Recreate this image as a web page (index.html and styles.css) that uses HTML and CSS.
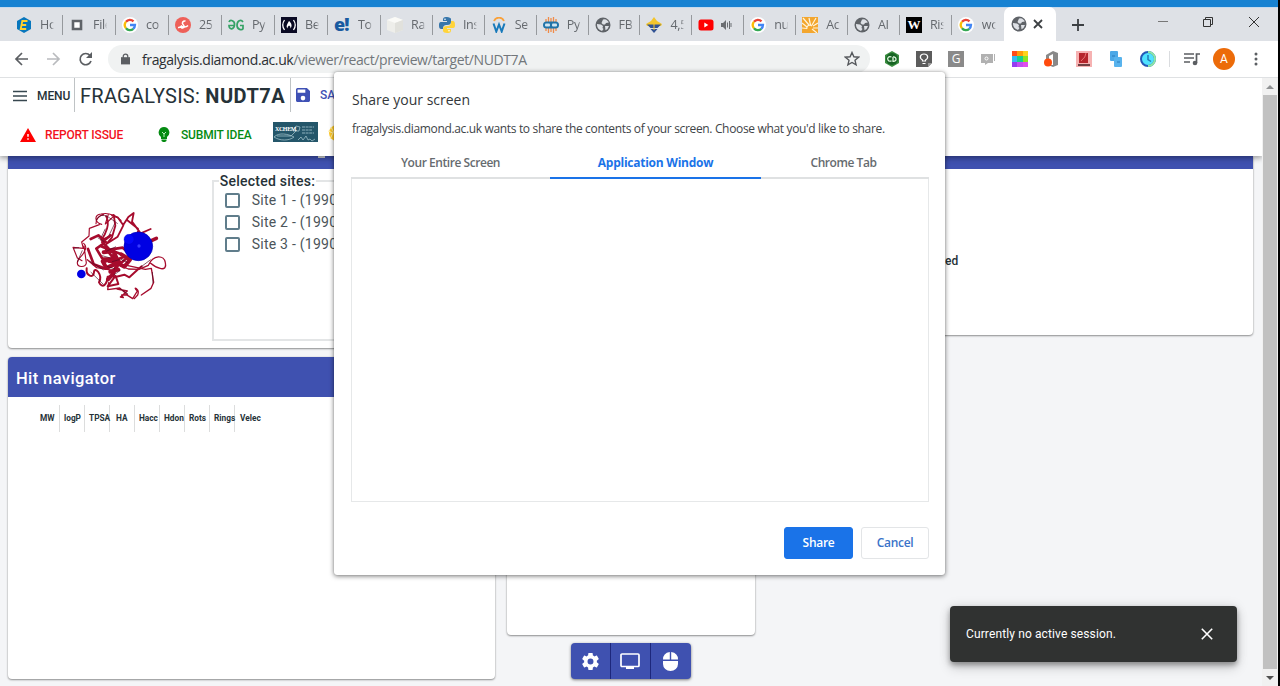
FILE: index.html
```html
<!DOCTYPE html>
<html lang="en">
<head>
<meta charset="utf-8">
<title>Fragalysis: NUDT7A</title>
<link rel="stylesheet" href="styles.css">
</head>
<body>
<svg class="defs" width="0" height="0">
  <symbol id="google" viewBox="0 0 16 16"><circle cx="8" cy="8" r="8" fill="#fff"/><g fill="none" stroke-width="2.3"><path d="M4 4.8A5 5 0 0 1 11.5 4.4" stroke="#ea4335"/><path d="M4 11.2A5 5 0 0 1 4 4.8" stroke="#fbbc05"/><path d="M11.3 11.8A5 5 0 0 1 4 11.2" stroke="#34a853"/><path d="M8 8h5A5 5 0 0 1 11.2 11.8" stroke="#4285f4"/></g></symbol>
  <symbol id="globe" viewBox="0 0 16 16"><circle cx="8" cy="8" r="7.500" fill="#5f6368"/><path d="M2 7l4 .5 2 1.500-.5 2 1 1-1.500 2C4 13 2 11 2 8zM8 2.500l2-.3c2 .6 3.300 2 3.800 3.300L11 6l-1 1.500H8L6.500 6zM10 9h4l-1.500 3-2 1.200z" fill="#dee1e6"/></symbol>
</svg>
<div class="browser">
  <div class="titlebar"></div>
  <div class="tabs">
    <div class="tab"><svg class="fav" viewBox="0 0 16 16"><path d="M8 0l7 4v8l-7 4-7-4V4z" fill="#0877bd"/><path d="M11.500 4H6.300L4.700 12h5.500M5.500 8h4.700" stroke="#ffd02e" stroke-width="1.8" fill="none"/></svg><span>Ho</span></div>
    <div class="tab"><svg class="fav" viewBox="0 0 16 16"><path d="M4 4h8v8H4z" fill="#fff" stroke="#5f6368" stroke-width="2.600"/></svg><span>File</span></div>
    <div class="tab"><svg class="fav"><use href="#google"/></svg><span>co</span></div>
    <div class="tab"><svg class="fav" viewBox="0 0 16 16"><circle cx="8" cy="8" r="8" fill="#ee6059"/><path d="M3 10.500c2 .5 3-.5 4-2M10.500 4C8 3.500 6.500 6 8 7.500s2 3-.5 3.500c-1.500.2-1.500-1.500 0-1.200 2 .4 4 .4 5.500-1.300" stroke="#fff" stroke-width="1.500" fill="none"/></svg><span>25</span></div>
    <div class="tab"><svg class="fav" viewBox="0 0 16 16"><g fill="none" stroke="#35a266" stroke-width="1.700"><path d="M1 5C2 2.500 7 3 6.500 8S1 13 1 8.500h6M15 5c-2-3-6-1.500-6 3.300s5 5 6 3.500V8.500h-3"/></g></svg><span>Py</span></div>
    <div class="tab"><svg class="fav" viewBox="0 0 16 16"><path d="M0 0h16v16H0z" fill="#0a0a23"/><path d="M3.500 3Q0 8 3.500 13M12.500 3q3.500 5 0 10" fill="none" stroke="#fff" stroke-width="1.300"/><path d="M8 4c2.500 2 3.500 5 1.500 7.500C9.500 9.500 9 9 8 8.500 7 9.500 6.500 10 6.500 11.500 4.500 9 6.500 7 8 4z" fill="#fff"/></svg><span>Be</span></div>
    <div class="tab"><b class="fav eb">e!</b><span>Top</span></div>
    <div class="tab"><svg class="fav" viewBox="0 0 16 16"><path d="M8 0l8 3v10l-8 3-8-3V3z" fill="#eeeeea"/><path d="M0 3l8 3 8-3-8-3z" fill="#fafaf7"/><path d="M8 6l8-3v10l-8 3z" fill="#e1e1dc"/></svg><span>Ra</span></div>
    <div class="tab"><svg class="fav" viewBox="0 0 16 16"><path d="M8 0C4 0 4 1 4 4h4v1H2C0 5 0 7 0 8s0 4 2 4h2c0-3 1-4 4-4s4-1 4-3V2c0-1-2-2-4-2z" fill="#3776ab"/><path d="M8 16c4 0 4-1 4-4H8v-1h6c2 0 2-2 2-3s0-4-2-4h-2c0 4-1 5-4 5s-4 1-4 3v2c0 1 2 2 4 2z" fill="#ffd43b"/><circle cx="6" cy="2.300" r=".8" fill="#fff"/><circle cx="10" cy="13.700" r=".8" fill="#fff"/></svg><span>Ins</span></div>
    <div class="tab"><svg class="fav" viewBox="0 0 16 16"><path d="M3 4C5-.5 11-.5 13 4" fill="none" stroke="#f9a13a" stroke-width="1.800"/><path d="M2.500 6.500l2.800 8L8 7.500l2.700 7 2.800-8" fill="none" stroke="#1779ba" stroke-width="2"/></svg><span>Se</span></div>
    <div class="tab"><svg class="fav" viewBox="0 0 16 16"><g stroke="#f08b49" stroke-width="1.300"><path d="M3 2v12M5.500 0v16M8 1v14M10.500 0v16M13 2v12"/></g><rect y="4.500" width="16" height="7" rx="3.500" fill="#2173a8"/><rect x="2" y="6.500" width="5" height="3" rx="1" fill="#cfe5f2"/><rect x="9" y="6.500" width="5" height="3" rx="1" fill="#cfe5f2"/></svg><span>Py</span></div>
    <div class="tab"><svg class="fav"><use href="#globe"/></svg><span>FB</span></div>
    <div class="tab"><svg class="fav" viewBox="0 0 16 16"><path d="M8 0l3 4 5 3-1 2H1L0 7l5-3z" fill="#f4c52c"/><path d="M1 7.500h14L11.500 11h-7zM4.500 12h7L8 16z" fill="#315294"/><path d="M8 5v8" stroke="#f4c52c"/></svg><span>4,5</span></div>
    <div class="tab"><svg class="fav" viewBox="0 0 16 16"><rect x=".5" y="2.500" width="15" height="11" rx="2.500" fill="#f00"/><path d="M6.300 5.500v5l4-2.500z" fill="#fff"/></svg><svg class="audio" viewBox="0 0 11 10"><path d="M0 3h2l3-3v10L2 7H0z" fill="#6b6e72"/><path d="M6.500 2.500v5M8.500 1v8M10 3v4" stroke="#6b6e72"/></svg></div>
    <div class="tab"><svg class="fav"><use href="#google"/></svg><span>nu</span></div>
    <div class="tab"><svg class="fav" viewBox="0 0 16 16"><path d="M0 0h16v16H0z" fill="#f3a62e"/><path d="M0 6l5 4M1 1l6 7M7 1l1.500 7M14 1l-4 7M16 6l-5 3M16 11l-5 0M15 16l-5-4M0 11l5 .5M5 12a3 3 0 0 1 5-3" stroke="#fff4db" stroke-width="1.200" fill="none"/></svg><span>Ac</span></div>
    <div class="tab"><svg class="fav"><use href="#globe"/></svg><span>AI</span></div>
    <div class="tab"><b class="fav wb">W</b><span>Ris</span></div>
    <div class="tab"><svg class="fav"><use href="#google"/></svg><span>wo</span></div>
    <div class="tab active"><svg class="fav"><use href="#globe"/></svg><svg class="tabclose" viewBox="0 0 10 10"><path d="M1 1l8 8M9 1l-8 8"/></svg></div>
    <svg class="newtab" viewBox="0 0 12 12"><path d="M6 0v12M0 6h12"/></svg>
    <svg class="wincontrols" viewBox="0 0 104 14"><path d="M1 6.500h10" stroke="#777"/><path d="M46.500 4.500h7v7h-7zM48.500 4V2.500h7v7H54M92 2l10 10M102 2L92 12" fill="none" stroke="#333"/></svg>
  </div>
  <div class="toolbar">
    <svg class="nav" viewBox="0 0 80 16"><g fill="none" stroke-width="1.700"><path d="M14 8H2M8 2L2 8l6 6" stroke="#5b5e62"/><path d="M33 8h12M39 2l6 6-6 6" stroke="#b9bbbe"/><path d="M76 4.500A5.600 5.600 0 1 0 77 10" stroke="#5b5e62"/></g><path d="M78 1v6h-6z" fill="#5b5e62"/></svg>
    <div class="omnibox">
      <svg class="lock" viewBox="0 0 10 12"><path d="M0 4h10v8H0z" fill="#5b5e62"/><path d="M2.500 5V3a2.500 2.500 0 0 1 5 0v2" fill="none" stroke="#5b5e62" stroke-width="1.400"/></svg>
      <span class="url"><i>fragalysis.diamond.ac.uk</i>/viewer/react/preview/target/NUDT7A</span>
      <svg class="star" viewBox="0 0 16 16"><path d="M8 1.500l1.900 4.300 4.700.4-3.600 3.100 1.100 4.600L8 11.500l-4.100 2.400L5 9.300 1.400 6.200l4.700-.4z" fill="none" stroke="#55585c" stroke-width="1.400"/></svg>
    </div>
    <div class="extensions">
      <svg viewBox="0 0 16 16"><path d="M8 0l7 4v8l-7 4-7-4V4z" fill="#3b8d40"/><circle cx="8" cy="8" r="6" fill="#176424"/><path d="M7.500 6C4.500 5 3 7 4 9s3 1 3.500 1M9 6v4.300c4 .7 4-5 0-4.300" fill="none" stroke="#e1f7df" stroke-width="1.300"/></svg>
      <svg viewBox="0 0 16 16"><path d="M0 0h16v12l-4 4H0z" fill="#5c5c5c"/><path d="M12 16v-4h4z" fill="#999"/><path d="M6.500 10V9C3 7 4 3 8 3s5 4 1.500 6v1zM6.500 12.500h3" fill="none" stroke="#fff" stroke-width="1.200"/></svg>
      <b class="gbox">G</b>
      <svg viewBox="0 0 16 16"><path d="M1 3h12v9H8l-3 2v-2H1zM14 3h1v7h-1z" fill="#b1b1b1"/><circle cx="6.500" cy="7.500" r="1.500" fill="none" stroke="#fff"/></svg>
      <svg viewBox="0 0 16 16"><path d="M0 0h5v5H0z" fill="#ff4b19"/><path d="M5 0h6v5H5z" fill="#ff9b0b"/><path d="M11 0h5v5h-5z" fill="#ffd31b"/><path d="M0 5h5v6H0z" fill="#35baf1"/><path d="M5 5h6v6H5z" fill="#16cf91"/><path d="M11 5h5v6h-5z" fill="#8be522"/><path d="M0 11h5v5H0z" fill="#943cf0"/><path d="M5 11h6v5H5z" fill="#c34df2"/><path d="M11 11h5v5h-5z" fill="#e14eed"/></svg>
      <svg viewBox="0 0 16 16"><path d="M2 4l7-4 5 2v12l-5 2-5-2h5V3L5 5v5H2z" fill="#898989"/><circle cx="4" cy="11.500" r="4" fill="#ff4b0d"/></svg>
      <svg viewBox="0 0 16 16"><path d="M0 0h16v16H0z" fill="#f6b2b2"/><path d="M3 2h9v10H3z" fill="#b6252c"/><path d="M5 10q5-4 5-8" stroke="#e87272" fill="none"/><path d="M2 14h12" stroke="#431d20" stroke-width="1.500"/></svg>
      <svg viewBox="0 0 16 16"><rect x="2" width="8" height="10" rx="1" fill="#4ca8e7"/><rect x="6" y="6" width="8" height="10" rx="1" fill="#58b3ed"/><path d="M4 5h3M9 11h3" stroke="#2a7bbb"/></svg>
      <svg viewBox="0 0 16 16"><circle cx="8" cy="8" r="7" fill="#4fe2ff" stroke="#2559b7" stroke-width="2"/><path d="M8 1a7 7 0 0 1 0 14" stroke="#8ee7a5" stroke-width="2" fill="none"/><path d="M8 4v4.500l3 2" fill="none" stroke="#237bb6" stroke-width="1.500"/></svg>
    </div>
    <i class="divider"></i>
    <svg class="queue" viewBox="0 0 16 14"><path d="M0 2h10M0 6h10M0 10h6M12.500 11V2H16" fill="none" stroke="#5b5e62" stroke-width="1.700"/><circle cx="11" cy="11" r="2.300" fill="#5b5e62"/></svg>
    <span class="avatar">A</span>
    <svg class="dots" viewBox="0 0 4 14"><g fill="#5b5e62"><circle cx="2" cy="2" r="1.500"/><circle cx="2" cy="7" r="1.500"/><circle cx="2" cy="12" r="1.500"/></g></svg>
  </div>
  <div class="viewport">
    <main class="page">
      <header class="apphead">
        <div class="row main-row">
          <div class="menu"><svg viewBox="0 0 14 12"><path d="M0 1.500h14M0 6h14M0 10.500h14"/></svg>MENU</div>
          <h1>FRAGALYSIS: <b>NUDT7A</b></h1>
          <div class="save"><svg viewBox="3 3 18 18"><path fill="#3f51b5" d="M17 3H5a2 2 0 0 0-2 2v14c0 1.100.9 2 2 2h14c1.100 0 2-.9 2-2V7zm-5 16a3 3 0 1 1 0-6 3 3 0 0 1 0 6zm3-10H5V5h10z"/></svg>SAVE</div>
        </div>
        <div class="row sub-row">
          <div class="report"><svg viewBox="1 2 22 19"><path fill="#f00" d="M1 21h22L12 2zm12-3h-2v-2h2zm0-4h-2v-4h2z"/></svg>REPORT ISSUE</div>
          <div class="idea"><svg viewBox="0 0 12 15"><path fill="#058b12" d="M6 0a5.500 5.500 0 0 0-3 10v2h6v-2A5.500 5.500 0 0 0 6 0zM3.500 12.500h5V14L7 15H5l-1.500-1z"/><path d="M6 10V7L4 5m2 2l2-2" stroke="#b7edbb" fill="none"/></svg>SUBMIT IDEA</div>
          <div class="xchem"><em>XCHEM</em><svg viewBox="0 0 45 20"><path d="M1 15c5-5 14-3 20 0-5 4-14 4-20 0zM4 14h14M20 9l3-5 4 1-1 4zM18 14l6-6M25 18l3-3 2 3 3-4 2 4 2-1 2 2 3-2" fill="none" stroke="#adcbd3" stroke-width=".7"/><path d="M29 5h12M29 8h10M29 11h12" stroke="#8eb1bd" stroke-width="1" stroke-dasharray="3 .6"/></svg></div>
          <svg class="sun" viewBox="0 0 20 20"><circle cx="10" cy="10" r="8" fill="#ffc928"/><path d="M1 8l5 2-3 6M4 4l3 6" stroke="#fff0ad" fill="none"/></svg>
        </div>
      </header>
      <div class="board">
        <div class="leftcol">
          <section class="card sites-card">
            <div class="bar"><i class="barmark"></i></div>
            <div class="sites-body">
              <svg class="protein" viewBox="200 140 320 300">
                <g fill="none" stroke="#a60b2d" stroke-linecap="round" stroke-linejoin="round">
                  <path d="M304 192c-21-5-24-29-2-31 25-6 44 5 60 19M287 190q0-22 23-27M324 162l-9 29 28-26M297 193l-30 11-1 23-22 18 5 19-31-3 13 32 14 8M250 249c11 9 5 20 0 29-7 12-20 18-19 30 0 13 24 15 27 0l-7-51" stroke-width="3.500"/>
                  <path d="M317 167c14 22-1 54-14 72l24-10M340 164l5 32-10 35-17 20 34-22 17-34-17-24-17-6M369 193l15-23 16-12-5 26 26 35 30-13M380 179l33 26-1 20" stroke-width="5.500"/>
                  <path d="M271 236l23-11 22 20-28 20 18 30 34 0-24-31 45 17M300 257l43 17-12 31 37-14M263 266l17 46 36 13 42-17M331 225l-25 20 22 23 39-6 24 21-28 24-37-3" stroke-width="8"/>
                  <path d="M259 324c-3 23 21 32 22 11 1-19 28 9 15 31 10 20 24 8 26-17l24-2 8 24-32 7 20-27 30-8 15 8 27-25 10-8" stroke-width="6"/>
                  <path d="M261 298l28 24 49 8 14-17 32 13 32 1 28-12c15-34 48-31 51-8 7 30-27 17-44 2M379 315l56 12 18-3 7 42-8 18-29 20M325 367l-3 21 36-5 24 21-18 0 5 8-9-2 21-18-31-6M377 402l20 13 14-23c-18-16 9-8 1 12l-10 11" stroke-width="4"/>
                  <path d="M310 276l29-4 10 22-42 9 11 20 38-19-18 37-15 16M363 282l26 16-17 21-32-17M330 334l24-6" stroke-width="12"/>
                  <path d="M453 241l15-7" stroke-width="11"/>
                </g>
                <path d="M287 180c18-29 37-10 65 10M315 205l-12 25M343 190l-17 35M220 264l16-2M246 270l-15 35M267 302l43 27M292 232l20 12M318 273l29-14M271 335l38 37M359 385l24 16M420 321l31-23M456 335l2 34M305 286l25 7M335 304l22-6M320 318l24 8M340 344l20-14M362 297l20 10" fill="none" stroke="#4d0b24" stroke-width="2"/>
                <circle cx="414" cy="258" r="43" fill="#0000e3" stroke="#0000b3" stroke-width="2"/><circle cx="386" cy="237" r="15" fill="#0508fa" stroke="#0000c0"/><circle cx="416" cy="257" r="5" fill="#363aff"/><circle cx="243" cy="341" r="13" fill="#0000e5"/>
              </svg>
              <fieldset class="sites"><legend>Selected sites:</legend>
                <div class="site"><i></i>Site 1 - (1990)</div><div class="site"><i></i>Site 2 - (1990)</div><div class="site"><i></i>Site 3 - (1990)</div>
              </fieldset>
            </div>
          </section>
          <section class="card hits">
            <h2>Hit navigator</h2>
            <div class="cols"><span>MW</span><span>logP</span><span>TPSA</span><span>HA</span><span>Hacc</span><span>Hdon</span><span>Rots</span><span>Rings</span><span>Velec</span></div>
          </section>
        </div>
        <div class="midcol">
          <section class="card viewer"></section>
          <div class="tools">
            <span><svg viewBox="2 2 20 20"><path fill="#fff" d="M19.430 12.980c.04-.32.07-.64.07-.98s-.03-.66-.07-.98l2.110-1.650c.19-.15.24-.42.12-.64l-2-3.460c-.12-.22-.39-.3-.61-.22l-2.490 1c-.52-.4-1.080-.73-1.690-.98l-.38-2.650C14.460 2.180 14.250 2 14 2h-4c-.25 0-.46.18-.49.42l-.38 2.650c-.61.25-1.170.59-1.690.98l-2.490-1c-.23-.09-.49 0-.61.22l-2 3.460c-.13.22-.07.49.12.64l2.110 1.650c-.04.32-.07.65-.07.98s.03.66.07.98l-2.110 1.650c-.19.15-.24.42-.12.64l2 3.460c.12.22.39.3.61.22l2.490-1c.52.4 1.080.73 1.690.98l.38 2.650c.03.24.24.42.49.42h4c.25 0 .46-.18.49-.42l.38-2.650c.61-.25 1.170-.59 1.690-.98l2.490 1c.23.09.49 0 .61-.22l2-3.460c.12-.22.07-.49-.12-.64zM12 15.500a3.500 3.500 0 1 1 0-7 3.500 3.500 0 0 1 0 7z"/></svg></span>
            <span><svg class="wide" viewBox="0 0 20 16"><rect x="1" y="1" width="18" height="12.500" rx="1" fill="none" stroke="#fff" stroke-width="1.700"/><path d="M6 14h8v2H6z" fill="#fff"/></svg></span>
            <span><svg class="mouse" viewBox="0 0 15 19"><path fill="#fff" d="M0 7.500Q0 1 6.800 0v7.500zM8.200 0Q15 1 15 7.500H8.200zM0 9h15v3a7.500 7 0 0 1-15 0z"/></svg></span>
          </div>
        </div>
        <section class="card summary"><div class="bar"></div><p>ted</p></section>
      </div>
    </main>
    <div class="scroll"><i class="up"></i><i class="thumb"></i><i class="down"></i></div>
  </div>
</div>

<div class="dialog">
  <h3>Share your screen</h3>
  <p>fragalysis.diamond.ac.uk wants to share the contents of your screen. Choose what you'd like to share.</p>
  <div class="dtabs"><span class="d1">Your Entire Screen</span><span class="d2">Application Window</span><span class="d3">Chrome Tab</span></div>
  <div class="preview"></div>
  <div class="actions"><button class="share">Share</button><button class="cancel">Cancel</button></div>
</div>
<div class="toast"><span>Currently no active session.</span><svg viewBox="0 0 12 12"><path d="M.8.8l10.400 10.400M11.200.8L.8 11.200"/></svg></div>
</body>
</html>
```
FILE: styles.css
```css
* { box-sizing: border-box; }
body { margin: 0; width: 1280px; height: 686px; overflow: hidden; position: relative; background: #000; font-family: Roboto, sans-serif; color: #263238; }
h1, h2, h3, p { margin: 0; font-weight: 400; }
i { font-style: normal; }
svg { display: block; flex: none; }
.defs { position: absolute; }
.browser { width: 1278px; height: 686px; display: flex; flex-direction: column; background: #fff; }
.titlebar { height: 7px; background: #1782d2; flex: none; }
.tabs { height: 34px; flex: none; display: flex; align-items: center; background: #dee1e6; padding-left: 10px; border-top: 1px solid #c5daee; font: 12.5px "Open Sans", sans-serif; color: #65696e; }
.tab { width: 51.9px; height: 20px; padding-left: 6px; flex: none; display: flex; align-items: center; border-right: 1px solid #96999d; }
.tab:nth-child(-n+7) { width: 53px; }
.tab span { width: 14px; margin-left: 8px; overflow: hidden; white-space: nowrap; letter-spacing: -.3px; -webkit-mask-image: linear-gradient(90deg, #000 80%, transparent); mask-image: linear-gradient(90deg, #000 80%, transparent); }
.tab:nth-child(19) { border: 0; }
.fav { width: 16px; height: 16px; flex: none; display: block; }
.eb { color: #185aa0; font: 800 18px/15px "Open Sans", sans-serif; letter-spacing: -1px; }
.wb { color: #fff; background: #000; text-align: center; font: 700 13px/16px "Liberation Serif", serif; }
.audio { width: 11px; height: 10px; margin-left: 7px; }
.tab.active { width: 52px; height: 34px; align-self: flex-end; background: #fff; border: 0; border-radius: 7px 7px 0 0; padding-left: 7px; }
.tabclose { width: 10px; height: 10px; margin-left: 6px; }
.tabclose path, .newtab path { stroke: #3c4043; stroke-width: 1.8; fill: none; }
.newtab { width: 12px; height: 12px; margin-left: 16px; }
.wincontrols { width: 104px; height: 14px; margin: -6px 17px 0 auto; }
.toolbar { height: 37px; flex: none; display: flex; align-items: center; border-bottom: 1px solid #dfe1e3; padding-left: 14px; }
.nav { width: 80px; height: 16px; }
.omnibox { width: 762px; height: 28px; margin-left: 14px; border-radius: 14px; background: #f0f2f2; display: flex; align-items: center; padding: 0 10px 0 13px; }
.lock { width: 9px; height: 12px; }
.url { margin-left: 12px; font: 14px "Open Sans", sans-serif; color: #72777b; letter-spacing: -.4px; white-space: nowrap; }
.url i { color: #2c3034; }
.star { width: 16px; height: 16px; margin-left: auto; }
.extensions { display: flex; gap: 16px; margin-left: 14px; }
.extensions svg, .gbox { width: 16px; height: 16px; }
.gbox { background: #8a8a8a; color: #fff; text-align: center; font: 12px/16px "Open Sans", sans-serif; }
.divider { width: 1px; height: 16px; background: #dadcdf; margin-left: 13px; }
.queue { width: 16px; height: 14px; margin-left: 14px; }
.avatar { width: 22px; height: 22px; border-radius: 50%; background: #ec6b09; color: #fff; text-align: center; font-size: 12px; line-height: 22px; margin-left: 13px; }
.dots { width: 4px; height: 14px; margin-left: 19px; }
.viewport { flex: 1; min-height: 0; display: flex; }
.page { width: 1262px; background: #f4f5f7; display: flex; flex-direction: column; overflow: hidden; }
.apphead { height: 78px; flex: none; background: #fff; position: relative; z-index: 1; box-shadow: 0 2px 5px rgba(0,0,0,.3), 0 1px 8px rgba(0,0,0,.12); }
.row { display: flex; align-items: center; }
.main-row { height: 34px; }
.main-row > * { height: 34px; display: flex; align-items: center; }
.menu { width: 75px; padding: 1px 0 0 13px; border-right: 1px solid #bfc3c5; font-size: 12px; font-weight: 500; letter-spacing: -.1px; }
.menu svg { width: 14px; height: 12px; margin-right: 10px; }
.menu path { stroke: #37474f; stroke-width: 1.4; }
h1 { width: 216px; padding: 1px 0 0 5px; border-right: 1px solid #bfc3c5; font-size: 20px; white-space: pre; letter-spacing: .25px; }
h1 b { font-weight: 700; letter-spacing: .5px; }
.save { padding-left: 5px; color: #3f51b5; font-size: 12px; font-weight: 500; }
.save svg { width: 14px; height: 14px; margin-right: 10px; }
.sub-row { height: 44px; font-size: 12px; font-weight: 500; letter-spacing: -.16px; }
.sub-row > div { display: flex; align-items: center; }
.sub-row > .report, .sub-row > .idea { padding-top: 1px; }
.report { color: #f3121c; width: 138px; padding-left: 20px; }
.report svg { width: 16px; height: 14px; margin-right: 9px; }
.idea { color: #058b12; width: 135px; padding-left: 20px; }
.idea svg { width: 12px; height: 15px; margin-right: 11px; }
.xchem { width: 45px; height: 20px; background: #24566a; position: relative; margin-top: -4px; }
.xchem em { position: absolute; left: 2px; top: 3px; font: 700 6px/8px "Liberation Serif", serif; color: #fff; letter-spacing: -.4px; }
.sun { width: 20px; height: 20px; margin: -3px 0 0 9px; }
.board { flex: 1; display: flex; align-items: flex-start; padding-left: 8px; }
.card { background: #fff; border-radius: 0 0 4px 4px; box-shadow: 0 1px 2px rgba(0,0,0,.4), 0 0 2px rgba(0,0,0,.12); }
.leftcol { width: 487px; }
.bar { height: 13px; background: #3f51b0; display: flex; justify-content: center; }
.barmark { width: 7px; height: 2px; background: #ced0d3; margin-left: 139px; }
.sites-card { height: 192px; }
.sites-body { display: flex; }
.protein { width: 106.700px; height: 100px; margin: 37.700px 37.300px 0 58.700px; }
.sites { width: 270px; height: 168px; margin: 4px 0 0 1px; border: 2px solid #e3e5e6; padding: 0 0 0 11px; }
.sites legend { font-size: 14px; font-weight: 500; line-height: 16px; letter-spacing: .25px; margin-left: -6px; padding: 0 1px; color: #263238; }
.site { height: 22px; display: flex; align-items: center; font-size: 14px; letter-spacing: .25px; color: #4b555a; }
.site i { width: 15px; height: 15px; border: 2px solid #607d8b; border-radius: 2px; margin-right: 12px; }
.hits { height: 322px; margin-top: 9px; border-radius: 4px; overflow: hidden; }
h2 { height: 40px; line-height: 43px; background: #3f51b0; color: #fff; font-size: 16.500px; font-weight: 500; padding-left: 8px; letter-spacing: .4px; }
.cols { display: flex; margin: 8px 0 0 27px; font-size: 8.300px; font-weight: 700; }
.cols span { width: 25px; height: 27px; line-height: 26px; padding-left: 4px; border-right: 1px solid #dcdddd; white-space: nowrap; }
.cols span:first-child { padding-left: 5px; }
.cols span:nth-child(4) { padding-left: 6px; }
.cols span:last-child { border: 0; padding-left: 5px; }
.midcol { width: 248px; margin-left: 12px; display: flex; flex-direction: column; align-items: center; }
.viewer { width: 248px; height: 479px; }
.tools { display: flex; margin-top: 8px; width: 120px; height: 36px; border-radius: 4px; background: #3f51b0; box-shadow: 0 1px 3px rgba(0,0,0,.5); }
.tools span { width: 40px; display: flex; align-items: center; justify-content: center; border-right: 1px solid #1d277b; padding-right: 1px; }
.tools span:last-child { border: 0; }
.tools svg { width: 17px; height: 17px; }
.tools svg.wide { width: 20px; height: 16px; }
.tools svg.mouse { width: 15px; height: 19px; }
.summary { flex: 1; height: 179px; margin: 0 9px 0 12px; }
.summary p { margin: 84px 0 0 174px; font-size: 12px; font-weight: 500; line-height: 16px; }
.scroll { width: 16px; background: #f1f1f1; display: flex; flex-direction: column; align-items: center; }
.scroll .up { border: 4px solid transparent; border-top: 0; border-bottom: 4px solid #909294; margin: 7px 0 6px; }
.scroll .thumb { width: 14px; height: 574px; background: #c1c1c1; }
.scroll .down { border: 4px solid transparent; border-bottom: 0; border-top: 4px solid #505050; margin-top: 7px; }
.dialog { position: absolute; left: 334px; top: 72px; width: 611px; height: 503px; background: #fff; border-radius: 3px; z-index: 5; padding: 17px 16px 0 17px; box-shadow: 0 1px 5px rgba(0,0,0,.55), 0 0 1px rgba(0,0,0,.3); font-family: "Open Sans", sans-serif; display: flex; flex-direction: column; }
h3 { font-size: 14px; line-height: 22px; color: #33373a; margin-left: 1px; }
.dialog p { font-size: 12px; line-height: 18px; margin: 9px 0 0 1px; white-space: nowrap; letter-spacing: -.34px; color: #404448; }
.dtabs { height: 41px; margin-top: 0; display: flex; border-bottom: 2px solid #dfe1e2; font-size: 12px; font-weight: 600; line-height: 49px; letter-spacing: -.45px; text-align: center; color: #666b6f; }
.d1 { width: 199px; }
.d2 { width: 211px; height: 41px; border-bottom: 2px solid #1a73e8; color: #1a73e8; font-weight: 700; letter-spacing: -.25px; }
.d3 { flex: 1; padding-right: 3px; }
.preview { height: 323px; border: 1px solid #e6e8e9; border-top: 0; }
.actions { display: flex; justify-content: flex-end; gap: 8px; margin-top: 25px; }
button { width: 69px; height: 32px; border-radius: 3px; font: 600 12px "Open Sans", sans-serif; letter-spacing: -.3px; padding: 0 0 1px; }
.share { background: #1a73e8; border: 1px solid #1a73e8; color: #fff; }
.cancel { width: 68px; background: #fff; border: 1px solid #e3e5e7; color: #3a73c9; }
.toast { position: absolute; left: 950px; top: 606px; width: 287px; height: 56px; z-index: 6; background: #303231; border-radius: 4px; display: flex; align-items: center; justify-content: space-between; padding: 0 24px 0 16px; color: #fff; font-size: 12px; letter-spacing: .12px; box-shadow: 0 3px 5px rgba(0,0,0,.3), 0 6px 12px rgba(0,0,0,.17), 0 0 12px rgba(0,0,0,.1); }
.toast svg { width: 12px; height: 12px; }
.toast path { stroke: #fff; stroke-width: 1.600; }
```
